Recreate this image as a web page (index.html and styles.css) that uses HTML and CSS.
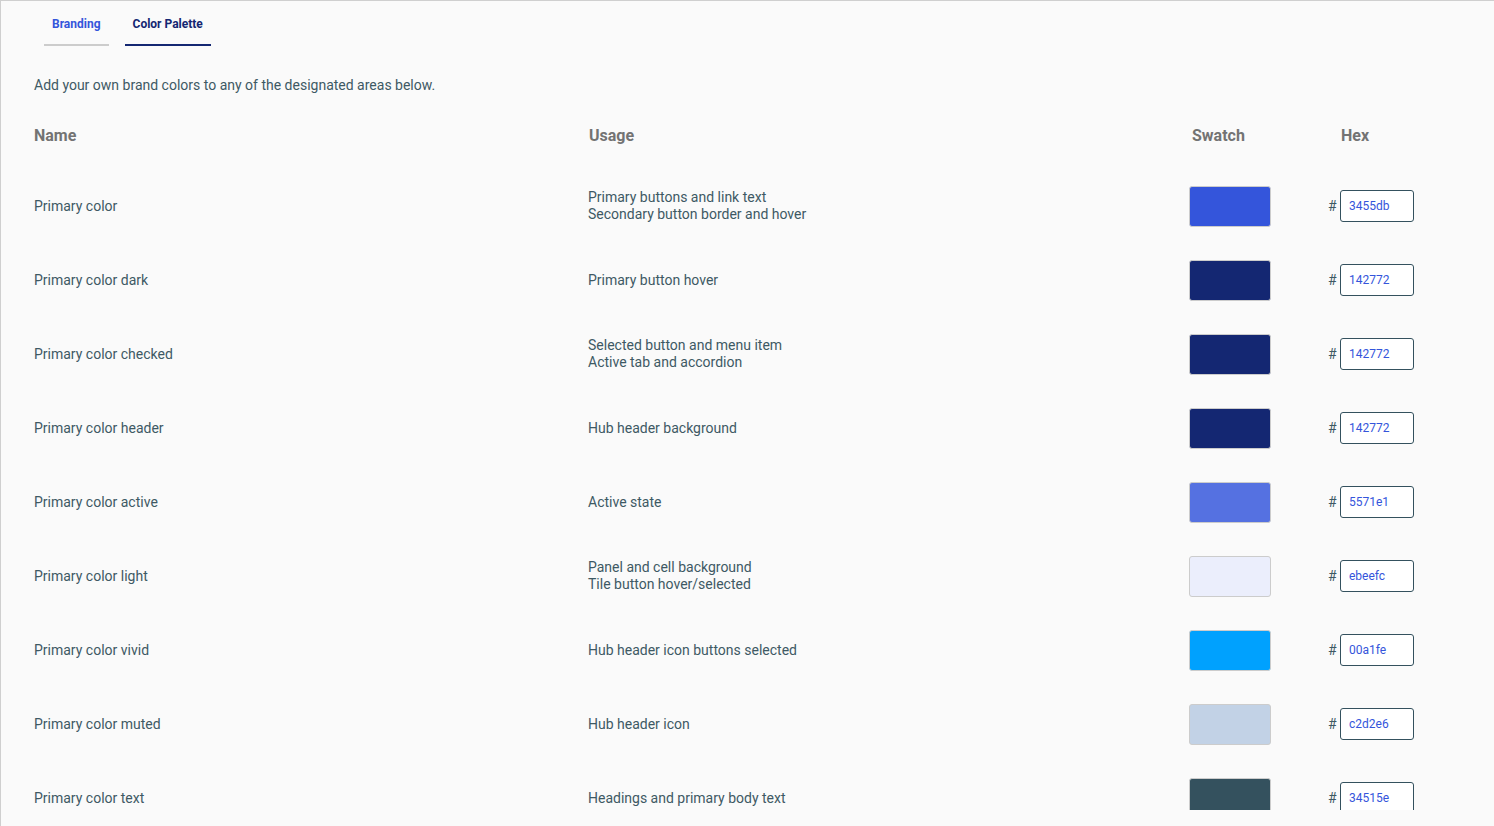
FILE: index.html
```html
<!doctype html>
<html>
	<head>
		<meta charset="utf-8"/>
		<title>Color Palette</title>
		<link rel="stylesheet" href="styles.css">
	</head>
	<body>
		<div class="frame">
			<div class="scroll">
				<div class="tabs">
					<div class="tab">Branding</div>
					<div class="tab active">Color Palette</div>
				</div>

				<p class="intro">Add your own brand colors to any of the designated areas below.</p>

				<div class="palette">
					<div class="row head">
						<div>Name</div>
						<div class="h-usage">Usage</div>
						<div class="h-swatch">Swatch</div>
						<div class="h-hex">Hex</div>
					</div>

					<div class="row">
						<div class="name">Primary color</div>
						<div class="usage">Primary buttons and link text<br>Secondary button border and hover</div>
						<div><span class="swatch" style="background:#3455db"></span></div>
						<div class="hex"><span class="hash">#</span><input class="hex-input" value="3455db"></div>
					</div>
					<div class="row">
						<div class="name">Primary color dark</div>
						<div class="usage">Primary button hover</div>
						<div><span class="swatch" style="background:#142772"></span></div>
						<div class="hex"><span class="hash">#</span><input class="hex-input" value="142772"></div>
					</div>
					<div class="row">
						<div class="name">Primary color checked</div>
						<div class="usage">Selected button and menu item<br>Active tab and accordion</div>
						<div><span class="swatch" style="background:#142772"></span></div>
						<div class="hex"><span class="hash">#</span><input class="hex-input" value="142772"></div>
					</div>
					<div class="row">
						<div class="name">Primary color header</div>
						<div class="usage">Hub header background</div>
						<div><span class="swatch" style="background:#142772"></span></div>
						<div class="hex"><span class="hash">#</span><input class="hex-input" value="142772"></div>
					</div>
					<div class="row">
						<div class="name">Primary color active</div>
						<div class="usage">Active state</div>
						<div><span class="swatch" style="background:#5571e1"></span></div>
						<div class="hex"><span class="hash">#</span><input class="hex-input" value="5571e1"></div>
					</div>
					<div class="row">
						<div class="name">Primary color light</div>
						<div class="usage">Panel and cell background<br>Tile button hover/selected</div>
						<div><span class="swatch" style="background:#ebeefc"></span></div>
						<div class="hex"><span class="hash">#</span><input class="hex-input" value="ebeefc"></div>
					</div>
					<div class="row">
						<div class="name">Primary color vivid</div>
						<div class="usage">Hub header icon buttons selected</div>
						<div><span class="swatch" style="background:#00a1fe"></span></div>
						<div class="hex"><span class="hash">#</span><input class="hex-input" value="00a1fe"></div>
					</div>
					<div class="row">
						<div class="name">Primary color muted</div>
						<div class="usage">Hub header icon</div>
						<div><span class="swatch" style="background:#c2d2e6"></span></div>
						<div class="hex"><span class="hash">#</span><input class="hex-input" value="c2d2e6"></div>
					</div>
					<div class="row">
						<div class="name">Primary color text</div>
						<div class="usage">Headings and primary body text</div>
						<div><span class="swatch" style="background:#34515e"></span></div>
						<div class="hex"><span class="hash">#</span><input class="hex-input" value="34515e"></div>
					</div>
				</div>
			</div>
		</div>
	</body>
</html>
```

FILE: styles.css
```css
html,body{height:100%;margin:0;padding:0;}
body{background:#fafafa;font-family:Roboto,"Liberation Sans",sans-serif;color:#3e5964;}

/* outer frame */
.frame{height:826px;box-sizing:border-box;border-top:1px solid #cfcfcf;border-left:1px solid #cfcfcf;padding-bottom:16px;}
.scroll{height:100%;overflow:hidden;padding-left:33px;}

/* tabs */
.tabs{display:flex;gap:16px;margin-left:10px;}
.tab{padding:15px 8px 12px;font-size:12px;line-height:16px;font-weight:700;color:#3455db;border-bottom:2px solid #cccccc;}
.tab.active{color:#142772;border-bottom-color:#142772;}

.intro{margin:29px 0 0;font-size:14px;line-height:20px;}

/* table */
.row{display:grid;grid-template-columns:554px 601px 139px 1fr;align-items:center;height:74px;font-size:14px;}
.row.head{height:20px;margin:31px 0 23px;font-size:16px;line-height:20px;font-weight:700;color:#737373;}
.h-usage{padding-left:1px;}
.h-swatch{padding-left:3px;}
.h-hex{padding-left:13px;}
.usage{line-height:17px;}
.swatch{display:block;width:80px;height:39px;border:1px solid #cccccc;border-radius:3px;}
.hex{display:flex;align-items:center;}
.hash{width:12px;font-size:14px;}
.hex-input{height:30px;box-sizing:content-box;padding:0 0 0 8px;margin:0;width:64px;border:1px solid #34515e;border-radius:3px;background:#fff;color:#3455db;font-family:Roboto,"Liberation Sans",sans-serif;font-size:12px;outline:none;}
```
